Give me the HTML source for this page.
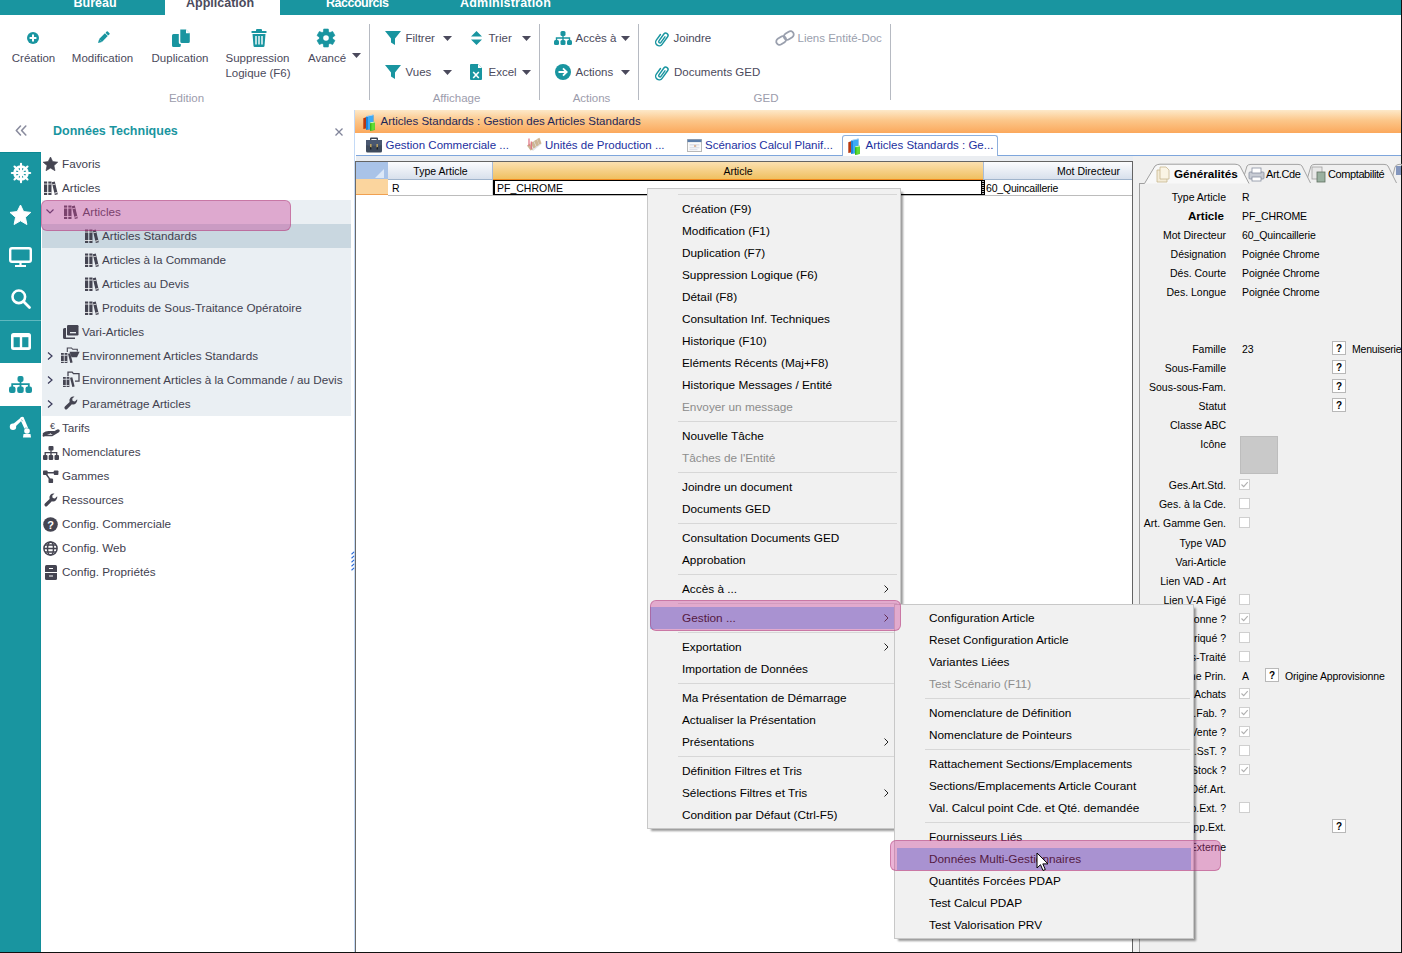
<!DOCTYPE html>
<html><head><meta charset="utf-8">
<style>
*{box-sizing:border-box;margin:0;padding:0}
html,body{width:1402px;height:953px;overflow:hidden;background:#fff;font-family:"Liberation Sans",sans-serif;position:relative}
.a{position:absolute;white-space:nowrap}
svg.a{overflow:visible}
</style></head><body>
<div class="a" style="left:0px;top:0px;width:1402px;height:15px;background:#1995a0"></div>
<div class="a" style="left:165px;top:0px;width:115px;height:15px;background:#fff"></div>
<div class="a" style="left:73.5px;top:-5.33px;font-size:12.5px;line-height:16px;color:#fff;font-weight:bold;">Bureau</div>
<div class="a" style="left:186px;top:-5.33px;font-size:12.5px;line-height:16px;color:#4b4a5c;font-weight:bold;">Application</div>
<div class="a" style="left:326px;top:-5.33px;font-size:12.5px;line-height:16px;color:#fff;font-weight:bold;letter-spacing:-0.5px;">Raccourcis</div>
<div class="a" style="left:460px;top:-5.33px;font-size:12.5px;line-height:16px;color:#fff;font-weight:bold;letter-spacing:0.2px;">Administration</div>
<svg class="a" style="left:27px;top:32px" width="12" height="12" viewBox="0 0 12 12"><circle cx="6" cy="6" r="6" fill="#1995a0"/><path d="M6 2.6v6.8M2.6 6h6.8" stroke="#fff" stroke-width="2"/></svg>
<div class="a" style="left:-26.5px;width:120px;text-align:center;top:51.02px;font-size:11.5px;line-height:14px;color:#4b4a5c;">Création</div>
<svg class="a" style="left:96px;top:31px" width="14" height="14" viewBox="0 0 14 14"><g transform="rotate(45 7 7)"><rect x="5" y="-1" width="4" height="2.6" rx="0.8" fill="#1995a0"/><rect x="5" y="2.3" width="4" height="8.2" fill="#1995a0"/><path d="M5 10.5h4L7 14z" fill="#1995a0"/></g></svg>
<div class="a" style="left:42.5px;width:120px;text-align:center;top:51.02px;font-size:11.5px;line-height:14px;color:#4b4a5c;">Modification</div>
<svg class="a" style="left:172px;top:29px" width="18" height="18" viewBox="0 0 18 18"><path d="M8.3 0.5H14l3.8 3.8v8.2a1.5 1.5 0 0 1-1.5 1.5H9.8a1.5 1.5 0 0 1-1.5-1.5z" fill="#1995a0"/><path d="M14 0.5v3.8h3.8z" fill="#fff"/><path d="M6.8 5H1.5A1.5 1.5 0 0 0 0 6.5v10A1.5 1.5 0 0 0 1.5 18h5.8a1.5 1.5 0 0 0 1.5-1.5V15H8.3A1.5 1.5 0 0 1 6.8 13.5z" fill="#1995a0"/></svg>
<div class="a" style="left:120.0px;width:120px;text-align:center;top:51.02px;font-size:11.5px;line-height:14px;color:#4b4a5c;">Duplication</div>
<svg class="a" style="left:251px;top:29px" width="16" height="18" viewBox="0 0 16 18"><rect x="0.5" y="2" width="15" height="2" rx="0.5" fill="#1995a0"/><rect x="5" y="0" width="6" height="3" rx="1" fill="#1995a0"/><path d="M1.5 5h13l-1 12a1.2 1.2 0 0 1-1.2 1H3.7a1.2 1.2 0 0 1-1.2-1z" fill="#1995a0"/><path d="M5 7v8.5M8 7v8.5M11 7v8.5" stroke="#fff" stroke-width="1.4"/></svg>
<div class="a" style="left:197.5px;width:120px;text-align:center;top:51.02px;font-size:11.5px;line-height:14px;color:#4b4a5c;">Suppression</div>
<div class="a" style="left:198.0px;width:120px;text-align:center;top:66.02px;font-size:11.5px;line-height:14px;color:#4b4a5c;">Logique (F6)</div>
<svg class="a" style="left:317px;top:29px" width="18" height="18" viewBox="0 0 18 18"><g fill="#1995a0" transform="translate(9 9)"><path d="M-2.3 -9H2.3L2.9 -5H-2.9z" transform="rotate(0)" stroke="#1995a0" stroke-width="0.6" stroke-linejoin="round"/><path d="M-2.3 -9H2.3L2.9 -5H-2.9z" transform="rotate(60)" stroke="#1995a0" stroke-width="0.6" stroke-linejoin="round"/><path d="M-2.3 -9H2.3L2.9 -5H-2.9z" transform="rotate(120)" stroke="#1995a0" stroke-width="0.6" stroke-linejoin="round"/><path d="M-2.3 -9H2.3L2.9 -5H-2.9z" transform="rotate(180)" stroke="#1995a0" stroke-width="0.6" stroke-linejoin="round"/><path d="M-2.3 -9H2.3L2.9 -5H-2.9z" transform="rotate(240)" stroke="#1995a0" stroke-width="0.6" stroke-linejoin="round"/><path d="M-2.3 -9H2.3L2.9 -5H-2.9z" transform="rotate(300)" stroke="#1995a0" stroke-width="0.6" stroke-linejoin="round"/><circle r="6.6"/><circle r="2.8" fill="#fff"/></g></svg>
<div class="a" style="left:308px;top:51.02px;font-size:11.5px;line-height:14px;color:#4b4a5c;">Avancé</div>
<svg class="a" style="left:352px;top:53px" width="9" height="5" viewBox="0 0 9 5"><path d="M0 0h9L4.5 5z" fill="#4b4a5c"/></svg>
<div class="a" style="left:369px;top:24px;width:1px;height:76px;background:#b6bac2"></div>
<div class="a" style="left:146.5px;width:80px;text-align:center;top:91.02px;font-size:11.5px;line-height:14px;color:#9c9cac;">Edition</div>
<svg class="a" style="left:385px;top:31px" width="16" height="14" viewBox="0 0 16 14"><path d="M0 0h16L10 7.5V14L6 11.5V7.5z" fill="#1995a0"/></svg>
<div class="a" style="left:405.5px;top:31.02px;font-size:11.5px;line-height:14px;color:#4b4a5c;">Filtrer</div>
<svg class="a" style="left:443px;top:36px" width="9" height="5" viewBox="0 0 9 5"><path d="M0 0h9L4.5 5z" fill="#4b4a5c"/></svg>
<svg class="a" style="left:471px;top:31px" width="11" height="14" viewBox="0 0 11 14"><path d="M5.5 0L11 5.5H0z M0 8.5h11L5.5 14z" fill="#1995a0"/></svg>
<div class="a" style="left:488.5px;top:31.02px;font-size:11.5px;line-height:14px;color:#4b4a5c;">Trier</div>
<svg class="a" style="left:522px;top:36px" width="9" height="5" viewBox="0 0 9 5"><path d="M0 0h9L4.5 5z" fill="#4b4a5c"/></svg>
<svg class="a" style="left:385px;top:65px" width="16" height="14" viewBox="0 0 16 14"><path d="M0 0h16L10 7.5V14L6 11.5V7.5z" fill="#1995a0"/></svg>
<div class="a" style="left:405.5px;top:65.02px;font-size:11.5px;line-height:14px;color:#4b4a5c;">Vues</div>
<svg class="a" style="left:443px;top:70px" width="9" height="5" viewBox="0 0 9 5"><path d="M0 0h9L4.5 5z" fill="#4b4a5c"/></svg>
<svg class="a" style="left:470px;top:64px" width="12" height="16" viewBox="0 0 12 16"><path d="M0 1a1 1 0 0 1 1-1h7l4 4v11a1 1 0 0 1-1 1H1a1 1 0 0 1-1-1z" fill="#1995a0"/><path d="M8 0v4h4z" fill="#fff"/><path d="M3.2 8l5.6 6M8.8 8l-5.6 6" stroke="#fff" stroke-width="1.6"/></svg>
<div class="a" style="left:488.5px;top:65.02px;font-size:11.5px;line-height:14px;color:#4b4a5c;">Excel</div>
<svg class="a" style="left:522px;top:70px" width="9" height="5" viewBox="0 0 9 5"><path d="M0 0h9L4.5 5z" fill="#4b4a5c"/></svg>
<div class="a" style="left:416.5px;width:80px;text-align:center;top:91.02px;font-size:11.5px;line-height:14px;color:#9c9cac;">Affichage</div>
<div class="a" style="left:539px;top:24px;width:1px;height:76px;background:#b6bac2"></div>
<svg class="a" style="left:554px;top:31px" width="18" height="14" viewBox="0 0 18 14"><g fill="#1995a0"><rect x="6.5" y="0" width="5" height="5" rx="1.5"/><rect x="0" y="9" width="5" height="5" rx="1.5"/><rect x="6.5" y="9" width="5" height="5" rx="1.5"/><rect x="13" y="9" width="5" height="5" rx="1.5"/></g><path d="M9 4v5M2.5 10V7h13v3" stroke="#1995a0" stroke-width="1.4" fill="none"/></svg>
<div class="a" style="left:575.5px;top:31.02px;font-size:11.5px;line-height:14px;color:#4b4a5c;">Accès à</div>
<svg class="a" style="left:621px;top:36px" width="9" height="5" viewBox="0 0 9 5"><path d="M0 0h9L4.5 5z" fill="#4b4a5c"/></svg>
<svg class="a" style="left:555px;top:64px" width="16" height="16" viewBox="0 0 16 16"><circle cx="8" cy="8" r="8" fill="#1995a0"/><path d="M3.5 8h8M8 4.3L11.7 8 8 11.7" stroke="#fff" stroke-width="1.8" fill="none"/></svg>
<div class="a" style="left:575.5px;top:65.02px;font-size:11.5px;line-height:14px;color:#4b4a5c;">Actions</div>
<svg class="a" style="left:621px;top:70px" width="9" height="5" viewBox="0 0 9 5"><path d="M0 0h9L4.5 5z" fill="#4b4a5c"/></svg>
<div class="a" style="left:551.5px;width:80px;text-align:center;top:91.02px;font-size:11.5px;line-height:14px;color:#9c9cac;">Actions</div>
<div class="a" style="left:638px;top:24px;width:1px;height:76px;background:#b6bac2"></div>
<svg class="a" style="left:654px;top:30px" width="16" height="17" viewBox="0 0 16 17"><g transform="translate(8 8.5) rotate(36) translate(-3.6 -8.3)"><path d="M5 5.2V12A1.25 1.25 0 0 1 2.5 12V3.6A2.3 2.3 0 0 1 7.1 3.6V13A3.55 3.55 0 0 1 0 13V6" stroke="#1995a0" stroke-width="1.45" fill="none" stroke-linecap="round"/></g></svg>
<div class="a" style="left:673.5px;top:31.02px;font-size:11.5px;line-height:14px;color:#4b4a5c;">Joindre</div>
<svg class="a" style="left:654px;top:64px" width="16" height="17" viewBox="0 0 16 17"><g transform="translate(8 8.5) rotate(36) translate(-3.6 -8.3)"><path d="M5 5.2V12A1.25 1.25 0 0 1 2.5 12V3.6A2.3 2.3 0 0 1 7.1 3.6V13A3.55 3.55 0 0 1 0 13V6" stroke="#1995a0" stroke-width="1.45" fill="none" stroke-linecap="round"/></g></svg>
<div class="a" style="left:674px;top:65.02px;font-size:11.5px;line-height:14px;color:#4b4a5c;">Documents GED</div>
<svg class="a" style="left:775px;top:30px" width="20" height="16" viewBox="0 0 20 16"><g stroke="#9aa0ae" stroke-width="1.8" fill="none" transform="translate(10 8) rotate(-33)"><rect x="-9.8" y="-3.3" width="10.5" height="6.6" rx="3.3"/><rect x="-0.7" y="-3.3" width="10.5" height="6.6" rx="3.3"/></g></svg>
<div class="a" style="left:797.5px;top:31.02px;font-size:11.5px;line-height:14px;color:#9aa0ae;">Liens Entité-Doc</div>
<div class="a" style="left:726.0px;width:80px;text-align:center;top:91.02px;font-size:11.5px;line-height:14px;color:#9c9cac;">GED</div>
<div class="a" style="left:890px;top:24px;width:1px;height:76px;background:#b6bac2"></div>
<svg class="a" style="left:15px;top:125px" width="12" height="11" viewBox="0 0 12 11"><path d="M5.5 1L1.3 5.5 5.5 10M10.8 1L6.6 5.5 10.8 10" stroke="#8a8c9e" stroke-width="1.6" fill="none" stroke-linecap="round" stroke-linejoin="round"/></svg>
<div class="a" style="left:53px;top:122.67px;font-size:12.5px;line-height:16px;color:#1995a0;font-weight:bold;">Données Techniques</div>
<svg class="a" style="left:335px;top:128px" width="8" height="8" viewBox="0 0 8 8"><path d="M0.5 0.5l7 7M7.5 0.5l-7 7" stroke="#80849a" stroke-width="1.3"/></svg>
<div class="a" style="left:0px;top:152px;width:41px;height:801px;background:#1995a0;border-top:1px solid #0b8893;border-right:1px solid #138e99"></div>
<div class="a" style="left:0px;top:320px;width:41px;height:1px;background:#5fb8bf"></div>
<div class="a" style="left:0px;top:363px;width:41px;height:43px;background:#fff"></div>
<svg class="a" style="left:11px;top:163px" width="20" height="20" viewBox="0 0 20 20"><g transform="translate(10 10)" fill="none" stroke="#fff"><circle r="6.4" stroke-width="2.8"/><circle r="2.2" fill="#fff" stroke="none"/><path d="M0 -2V-9.2" stroke-width="2.1" stroke-linecap="round" transform="rotate(0)"/><path d="M0 -2V-9.2" stroke-width="2.1" stroke-linecap="round" transform="rotate(45)"/><path d="M0 -2V-9.2" stroke-width="2.1" stroke-linecap="round" transform="rotate(90)"/><path d="M0 -2V-9.2" stroke-width="2.1" stroke-linecap="round" transform="rotate(135)"/><path d="M0 -2V-9.2" stroke-width="2.1" stroke-linecap="round" transform="rotate(180)"/><path d="M0 -2V-9.2" stroke-width="2.1" stroke-linecap="round" transform="rotate(225)"/><path d="M0 -2V-9.2" stroke-width="2.1" stroke-linecap="round" transform="rotate(270)"/><path d="M0 -2V-9.2" stroke-width="2.1" stroke-linecap="round" transform="rotate(315)"/></g></svg>
<svg class="a" style="left:10px;top:205px" width="21" height="20" viewBox="0 0 21 20"><path d="M10.5 0l3.1 6.6 7.2.8-5.4 4.9 1.5 7.2-6.4-3.7-6.4 3.7 1.5-7.2L0 7.4l7.2-.8z" fill="#fff" stroke="#fff" stroke-width="1" stroke-linejoin="round"/></svg>
<svg class="a" style="left:9px;top:247px" width="23" height="20" viewBox="0 0 23 20"><rect x="1.2" y="1.2" width="20.6" height="13.6" rx="1.8" fill="none" stroke="#fff" stroke-width="2.4"/><path d="M11.5 15v3.5M6 19h11" stroke="#fff" stroke-width="2.2"/></svg>
<svg class="a" style="left:11px;top:289px" width="20" height="20" viewBox="0 0 20 20"><circle cx="7.8" cy="7.8" r="6.3" fill="none" stroke="#fff" stroke-width="2.6"/><path d="M12.5 12.5l6 6" stroke="#fff" stroke-width="2.8" stroke-linecap="round"/></svg>
<svg class="a" style="left:11px;top:333px" width="20" height="17" viewBox="0 0 20 17"><rect x="0" y="0" width="20" height="17" rx="2.5" fill="#fff"/><rect x="2.6" y="4.2" width="6.2" height="10" fill="#1995a0"/><rect x="11.2" y="4.2" width="6.2" height="10" fill="#1995a0"/></svg>
<svg class="a" style="left:9px;top:376px" width="23" height="17" viewBox="0 0 23 17"><g fill="#1995a0"><rect x="8.5" y="0" width="6" height="6" rx="2"/><rect x="0" y="10.5" width="6.5" height="6.5" rx="2"/><rect x="8.2" y="10.5" width="6.5" height="6.5" rx="2"/><rect x="16.5" y="10.5" width="6.5" height="6.5" rx="2"/></g><path d="M11.5 5v6M3.2 11V8.2h16.6V11" stroke="#1995a0" stroke-width="1.8" fill="none"/></svg>
<svg class="a" style="left:9px;top:416px" width="22" height="22" viewBox="0 0 22 22"><g fill="#fff"><circle cx="4" cy="10.8" r="3.2"/><path d="M3.5 8.5L12 1.5a2 2 0 0 1 2.8.4l-1.5 2.2L6 11z"/><path d="M11.2 3.2a2 2 0 0 1 3.5-1.6l4.3 10.2-3.3 1.4z"/><circle cx="18" cy="15" r="2.8"/><path d="M14.5 18h7l.5 3.5h-8z"/></g><path d="M12.5 3.5l1.2 1.8M15.5 12.5l2 -.8" stroke="#1995a0" stroke-width="0.6"/></svg>
<div class="a" style="left:42px;top:200px;width:309px;height:216px;background:#eaeff3"></div>
<div class="a" style="left:42px;top:224px;width:309px;height:24px;background:#c9d7e0"></div>
<svg class="a" style="left:43px;top:157px" width="15" height="14" viewBox="0 0 21 20"><path d="M10.5 0l3.1 6.6 7.2.8-5.4 4.9 1.5 7.2-6.4-3.7-6.4 3.7 1.5-7.2L0 7.4l7.2-.8z" fill="#454552" stroke="#454552" stroke-width="1" stroke-linejoin="round"/></svg>
<div class="a" style="left:62px;top:156.45px;font-size:11.7px;line-height:15px;color:#41414f;">Favoris</div>
<svg class="a" style="left:43.5px;top:181px" width="14" height="14" viewBox="0 0 14 14"><g fill="#454552"><rect x="0" y="0.5" width="3.2" height="13.5"/><rect x="4.3" y="0.5" width="3.2" height="13.5"/><path d="M7.8 1.3L10.8 0.5 13.8 13.2 10.8 14z"/></g><g fill="#fff" opacity="0.85"><rect x="0" y="2.6" width="7.5" height="0.9"/><rect x="0" y="11" width="7.5" height="0.9"/><path d="M8.2 3.4l2.9-.75.2.9-2.9.75z"/><path d="M10.2 11.8l2.9-.75.2.9-2.9.75z"/></g></svg>
<div class="a" style="left:62px;top:180.45px;font-size:11.7px;line-height:15px;color:#41414f;">Articles</div>
<svg class="a" style="left:46px;top:209px" width="8" height="5" viewBox="0 0 8 5"><path d="M0.5 0.5L4 4 7.5 0.5" stroke="#3a3a5a" stroke-width="1.2" fill="none"/></svg>
<svg class="a" style="left:63.5px;top:205px" width="14" height="14" viewBox="0 0 14 14"><g fill="#454552"><rect x="0" y="0.5" width="3.2" height="13.5"/><rect x="4.3" y="0.5" width="3.2" height="13.5"/><path d="M7.8 1.3L10.8 0.5 13.8 13.2 10.8 14z"/></g><g fill="#fff" opacity="0.85"><rect x="0" y="2.6" width="7.5" height="0.9"/><rect x="0" y="11" width="7.5" height="0.9"/><path d="M8.2 3.4l2.9-.75.2.9-2.9.75z"/><path d="M10.2 11.8l2.9-.75.2.9-2.9.75z"/></g></svg>
<div class="a" style="left:82.5px;top:204.45px;font-size:11.7px;line-height:15px;color:#41414f;">Articles</div>
<svg class="a" style="left:84.5px;top:229px" width="14" height="14" viewBox="0 0 14 14"><g fill="#454552"><rect x="0" y="0.5" width="3.2" height="13.5"/><rect x="4.3" y="0.5" width="3.2" height="13.5"/><path d="M7.8 1.3L10.8 0.5 13.8 13.2 10.8 14z"/></g><g fill="#fff" opacity="0.85"><rect x="0" y="2.6" width="7.5" height="0.9"/><rect x="0" y="11" width="7.5" height="0.9"/><path d="M8.2 3.4l2.9-.75.2.9-2.9.75z"/><path d="M10.2 11.8l2.9-.75.2.9-2.9.75z"/></g></svg>
<div class="a" style="left:102px;top:228.45px;font-size:11.7px;line-height:15px;color:#41414f;">Articles Standards</div>
<svg class="a" style="left:84.5px;top:253px" width="14" height="14" viewBox="0 0 14 14"><g fill="#454552"><rect x="0" y="0.5" width="3.2" height="13.5"/><rect x="4.3" y="0.5" width="3.2" height="13.5"/><path d="M7.8 1.3L10.8 0.5 13.8 13.2 10.8 14z"/></g><g fill="#fff" opacity="0.85"><rect x="0" y="2.6" width="7.5" height="0.9"/><rect x="0" y="11" width="7.5" height="0.9"/><path d="M8.2 3.4l2.9-.75.2.9-2.9.75z"/><path d="M10.2 11.8l2.9-.75.2.9-2.9.75z"/></g></svg>
<div class="a" style="left:102px;top:252.45px;font-size:11.7px;line-height:15px;color:#41414f;">Articles à la Commande</div>
<svg class="a" style="left:84.5px;top:277px" width="14" height="14" viewBox="0 0 14 14"><g fill="#454552"><rect x="0" y="0.5" width="3.2" height="13.5"/><rect x="4.3" y="0.5" width="3.2" height="13.5"/><path d="M7.8 1.3L10.8 0.5 13.8 13.2 10.8 14z"/></g><g fill="#fff" opacity="0.85"><rect x="0" y="2.6" width="7.5" height="0.9"/><rect x="0" y="11" width="7.5" height="0.9"/><path d="M8.2 3.4l2.9-.75.2.9-2.9.75z"/><path d="M10.2 11.8l2.9-.75.2.9-2.9.75z"/></g></svg>
<div class="a" style="left:102px;top:276.45px;font-size:11.7px;line-height:15px;color:#41414f;">Articles au Devis</div>
<svg class="a" style="left:84.5px;top:301px" width="14" height="14" viewBox="0 0 14 14"><g fill="#454552"><rect x="0" y="0.5" width="3.2" height="13.5"/><rect x="4.3" y="0.5" width="3.2" height="13.5"/><path d="M7.8 1.3L10.8 0.5 13.8 13.2 10.8 14z"/></g><g fill="#fff" opacity="0.85"><rect x="0" y="2.6" width="7.5" height="0.9"/><rect x="0" y="11" width="7.5" height="0.9"/><path d="M8.2 3.4l2.9-.75.2.9-2.9.75z"/><path d="M10.2 11.8l2.9-.75.2.9-2.9.75z"/></g></svg>
<div class="a" style="left:102px;top:300.45px;font-size:11.7px;line-height:15px;color:#41414f;">Produits de Sous-Traitance Opératoire</div>
<svg class="a" style="left:63px;top:325px" width="16" height="14" viewBox="0 0 16 14"><g fill="#454552"><rect x="4" y="0" width="11.5" height="10.5" rx="1.2"/><path d="M0 4.5a1.5 1.5 0 0 1 1.5-1.5H3v9.5h9V14H1.5A1.5 1.5 0 0 1 0 12.5z"/></g><rect x="7" y="7" width="6" height="1.3" fill="#eaeff3"/></svg>
<div class="a" style="left:82px;top:324.45px;font-size:11.7px;line-height:15px;color:#41414f;">Vari-Articles</div>
<svg class="a" style="left:47px;top:352px" width="6" height="8" viewBox="0 0 6 8"><path d="M1 0.5L5 4 1 7.5" stroke="#3a3a5a" stroke-width="1.2" fill="none"/></svg>
<svg class="a" style="left:61px;top:347px" width="19" height="16" viewBox="0 0 19 16"><g fill="#454552"><rect x="0" y="6" width="2.8" height="10"/><rect x="3.6" y="6" width="2.8" height="10"/><path d="M7 6.8L9.3 6.2 11.6 15.4 9.3 16z"/></g><g fill="#eaeff3"><rect x="0" y="7.8" width="6.4" height="0.8"/><rect x="0" y="14" width="6.4" height="0.8"/></g><path d="M6.3 5V1h4.2l1.2 1.3h4.6V4.5" fill="none" stroke="#454552" stroke-width="1.1"/><path d="M8.5 4.8H18.6L16 10.2H10.5z" fill="#454552"/></svg>
<div class="a" style="left:82px;top:348.45px;font-size:11.7px;line-height:15px;color:#41414f;">Environnement Articles Standards</div>
<svg class="a" style="left:47px;top:376px" width="6" height="8" viewBox="0 0 6 8"><path d="M1 0.5L5 4 1 7.5" stroke="#3a3a5a" stroke-width="1.2" fill="none"/></svg>
<svg class="a" style="left:63px;top:371px" width="17" height="17" viewBox="0 0 17 17"><g fill="#454552"><rect x="0" y="6" width="2.8" height="10"/><rect x="3.6" y="6" width="2.8" height="10"/><path d="M7 6.8L9.3 6.2 11.6 15.4 9.3 16z"/></g><g fill="#eaeff3"><rect x="0" y="7.8" width="6.4" height="0.8"/><rect x="0" y="14" width="6.4" height="0.8"/></g><path d="M5 5.2V1.2h4.2l1.2 1.4h5.6V10.2H12" fill="none" stroke="#454552" stroke-width="1.3"/></svg>
<div class="a" style="left:82px;top:372.45px;font-size:11.7px;line-height:15px;color:#41414f;">Environnement Articles à la Commande / au Devis</div>
<svg class="a" style="left:47px;top:400px" width="6" height="8" viewBox="0 0 6 8"><path d="M1 0.5L5 4 1 7.5" stroke="#3a3a5a" stroke-width="1.2" fill="none"/></svg>
<svg class="a" style="left:64px;top:396px" width="14" height="14" viewBox="0 0 14 14"><path d="M13.2 3.2l-2.3 2.3-2.2-.5-.5-2.2L10.5.5A4.2 4.2 0 0 0 5.6 5.9L.9 10.6a1.6 1.6 0 0 0 2.3 2.3l4.7-4.7a4.2 4.2 0 0 0 5.3-5z" fill="#454552"/></svg>
<div class="a" style="left:82px;top:396.45px;font-size:11.7px;line-height:15px;color:#41414f;">Paramétrage Articles</div>
<svg class="a" style="left:43px;top:421px" width="17" height="16" viewBox="0 0 17 16"><text x="9.5" y="7.5" text-anchor="middle" font-size="9" font-family="Liberation Sans" fill="#454552">€</text><path d="M0.5 15.5V12.5Q3 10.5 6.5 10.8H11Q12.3 11 11.8 12.3H8" fill="#454552" stroke="#454552" stroke-width="1.4" stroke-linejoin="round"/><path d="M0.5 14.5H9L15.5 10.5Q16.3 10 15.7 9.3Q15 8.8 14 9.5L11 11.5" fill="none" stroke="#454552" stroke-width="1.6" stroke-linecap="round"/></svg>
<div class="a" style="left:62px;top:420.45px;font-size:11.7px;line-height:15px;color:#41414f;">Tarifs</div>
<svg class="a" style="left:43px;top:446px" width="16" height="14" viewBox="0 0 16 14"><g fill="#454552"><rect x="5.5" y="0" width="5" height="4.5" rx="1"/><rect x="0" y="9" width="4.5" height="5" rx="1"/><rect x="5.7" y="9" width="4.5" height="5" rx="1"/><rect x="11.5" y="9" width="4.5" height="5" rx="1"/></g><path d="M8 4v5M2.2 9V6.7h11.5V9" stroke="#454552" stroke-width="1.3" fill="none"/></svg>
<div class="a" style="left:62px;top:444.45px;font-size:11.7px;line-height:15px;color:#41414f;">Nomenclatures</div>
<svg class="a" style="left:43px;top:470px" width="16" height="14" viewBox="0 0 16 14"><g fill="#454552"><rect x="0" y="0.5" width="4.6" height="4.6" rx="0.8"/><rect x="10.8" y="0.5" width="4.6" height="4.6" rx="0.8"/><rect x="5.5" y="8.5" width="4.6" height="4.6" rx="1.2"/></g><path d="M3 2.8h9M2.4 3l5 7" stroke="#454552" stroke-width="1.4"/></svg>
<div class="a" style="left:62px;top:468.45px;font-size:11.7px;line-height:15px;color:#41414f;">Gammes</div>
<svg class="a" style="left:44px;top:493px" width="14" height="14" viewBox="0 0 14 14"><path d="M13.2 3.2l-2.3 2.3-2.2-.5-.5-2.2L10.5.5A4.2 4.2 0 0 0 5.6 5.9L.9 10.6a1.6 1.6 0 0 0 2.3 2.3l4.7-4.7a4.2 4.2 0 0 0 5.3-5z" fill="#454552"/></svg>
<div class="a" style="left:62px;top:492.45px;font-size:11.7px;line-height:15px;color:#41414f;">Ressources</div>
<svg class="a" style="left:43px;top:517px" width="15" height="15" viewBox="0 0 15 15"><circle cx="7.5" cy="7.5" r="7.3" fill="#454552"/><text x="7.5" y="11.5" text-anchor="middle" font-size="11" font-weight="bold" font-family="Liberation Sans" fill="#fff">?</text></svg>
<div class="a" style="left:62px;top:516.45px;font-size:11.7px;line-height:15px;color:#41414f;">Config. Commerciale</div>
<svg class="a" style="left:43px;top:541px" width="15" height="15" viewBox="0 0 15 15"><g fill="none" stroke="#454552" stroke-width="1.5"><circle cx="7.5" cy="7.5" r="6.6"/><ellipse cx="7.5" cy="7.5" rx="3" ry="6.6"/><path d="M1 7.5h13M2 4h11M2 11h11"/></g></svg>
<div class="a" style="left:62px;top:540.45px;font-size:11.7px;line-height:15px;color:#41414f;">Config. Web</div>
<svg class="a" style="left:45px;top:565px" width="12" height="15" viewBox="0 0 12 15"><rect x="0" y="0" width="12" height="15" rx="1.5" fill="#454552"/><path d="M0 7.5h12M4 3.5h4M4 11h4" stroke="#fff" stroke-width="1.2"/></svg>
<div class="a" style="left:62px;top:564.45px;font-size:11.7px;line-height:15px;color:#41414f;">Config. Propriétés</div>
<div class="a" style="left:354px;top:110px;width:1px;height:843px;background:#c4daf6"></div>
<div class="a" style="left:355px;top:161px;width:1px;height:792px;background:#6a6a6a"></div>
<svg class="a" style="left:351px;top:551px" width="4" height="20" viewBox="0 0 4 20"><g stroke="#2a6ad8" stroke-width="1.1" stroke-linecap="round"><path d="M0.8 3L2.8 1.2M0.8 7L2.8 5.2M0.8 11L2.8 9.2M0.8 15L2.8 13.2M0.8 19L2.8 17.2"/></g></svg>
<div class="a" style="left:355px;top:110px;width:1046px;height:23px;background:linear-gradient(#fde9c9,#fcc78a 45%,#fba85c)"></div>
<svg class="a" style="left:363px;top:114px" width="13" height="17" viewBox="0 0 13 17"><path d="M0.3 4.2L3 3.3V14.5L0.3 15z" fill="#b8380f"/><path d="M3 2.2L10.5 0.5V14.8L3 16z" fill="#1e86dc"/><path d="M5 2.2L10 1.1V14.4L5 15.3z" fill="#3eaaf4"/><path d="M3 2.2L10.5 0.5 11 1 3.5 2.8z" fill="#e8f4ff"/><path d="M7 8.6L11.8 7.6V16L7 17z" fill="#36b81c"/><path d="M8.4 8.8L11.8 8.1V15.6L8.4 16.4z" fill="#62dc34"/><path d="M7 8.6L11.8 7.6 12.2 8.2 7.4 9.2z" fill="#e8ffe0"/></svg>
<div class="a" style="left:380.5px;top:114.02px;font-size:11.5px;line-height:14px;color:#1e2758;">Articles Standards : Gestion des Articles Standards</div>
<div class="a" style="left:356px;top:133px;width:1046px;height:22px;background:#fff"></div>
<div class="a" style="left:356px;top:155px;width:1046px;height:1px;background:#7ea6dc"></div>
<div class="a" style="left:356px;top:156px;width:777px;height:6px;background:#eaedf1"></div>
<svg class="a" style="left:366px;top:137px" width="16" height="16" viewBox="0 0 16 16"><path d="M4 1.5Q4 0.5 5 0.5H11Q12 0.5 12 1.5V3H10.6V2H5.4V3H4z" fill="#3a4454"/><rect x="0" y="3" width="16" height="12.5" rx="1.5" fill="#3e4a5c"/><path d="M0 3h16v5.2Q8 9.5 0 8.2z" fill="#4a5870"/><rect x="4" y="7" width="1.6" height="3.6" fill="#b8a060"/><rect x="10.4" y="7" width="1.6" height="3.6" fill="#b8a060"/><rect x="4.3" y="10" width="1" height="2.5" fill="#111"/><rect x="10.7" y="10" width="1" height="2.5" fill="#111"/></svg>
<div class="a" style="left:385.5px;top:137.52px;font-size:11.5px;line-height:14px;color:#1c30a0;">Gestion Commerciale ...</div>
<svg class="a" style="left:526px;top:137px" width="16" height="16" viewBox="0 0 16 16"><path d="M1 9L10 3 15.5 7 7 14z" fill="#e4e4e8"/><g fill="#cdb594"><path d="M1 8.5L4 6.5 7 12.5 4.5 13.5z"/><path d="M4.5 6L7.5 4.2 10 10 7.5 11.5z"/><path d="M8 4L11 2.2 13 8 10.5 9.5z"/><path d="M11 2L13.5 0.8 15.5 6.5 13.2 7.6z"/></g><path d="M3 1.5V9M5.3 4.5V12" stroke="#e07080" stroke-width="1.2"/></svg>
<div class="a" style="left:545px;top:137.52px;font-size:11.5px;line-height:14px;color:#1c30a0;">Unités de Production ...</div>
<svg class="a" style="left:687px;top:139px" width="15" height="13" viewBox="0 0 15 13"><rect x="0.5" y="0.5" width="14" height="12" fill="#fafafa" stroke="#b8b8b8"/><rect x="0.5" y="0.5" width="14" height="2.6" fill="#5a7ca8"/><g fill="#dde0ea"><rect x="2.5" y="5" width="10" height="1.6"/><rect x="2.5" y="7.8" width="10" height="1.6"/><rect x="2.5" y="10" width="8" height="1.2"/></g><rect x="7" y="6" width="2.2" height="2" fill="#d8b8a0"/></svg>
<div class="a" style="left:705px;top:137.52px;font-size:11.5px;line-height:14px;color:#1c30a0;">Scénarios Calcul Planif...</div>
<div class="a" style="left:842px;top:135px;width:156px;height:21px;background:#fff;border:1px solid #8fb0dc;border-bottom:none;border-radius:3px 3px 0 0"></div>
<svg class="a" style="left:848px;top:138px" width="13" height="17" viewBox="0 0 13 17"><path d="M0.3 4.2L3 3.3V14.5L0.3 15z" fill="#b8380f"/><path d="M3 2.2L10.5 0.5V14.8L3 16z" fill="#1e86dc"/><path d="M5 2.2L10 1.1V14.4L5 15.3z" fill="#3eaaf4"/><path d="M3 2.2L10.5 0.5 11 1 3.5 2.8z" fill="#e8f4ff"/><path d="M7 8.6L11.8 7.6V16L7 17z" fill="#36b81c"/><path d="M8.4 8.8L11.8 8.1V15.6L8.4 16.4z" fill="#62dc34"/><path d="M7 8.6L11.8 7.6 12.2 8.2 7.4 9.2z" fill="#e8ffe0"/></svg>
<div class="a" style="left:865.5px;top:138.02px;font-size:11.5px;line-height:14px;color:#1c30a0;">Articles Standards : Ge...</div>
<div class="a" style="left:355px;top:161px;width:778px;height:1px;background:#646464"></div>
<div class="a" style="left:1132px;top:161px;width:1px;height:792px;background:#646464"></div>
<div class="a" style="left:356px;top:162px;width:32px;height:18px;background:#a9c3e8;border-bottom:1px solid #8aa8d0"></div>
<svg class="a" style="left:375px;top:169px" width="9" height="9" viewBox="0 0 9 9"><path d="M9 0v9H0z" fill="#dce8f8"/></svg>
<div class="a" style="left:388px;top:162px;width:105px;height:18px;background:linear-gradient(#fbfcfe,#d8e0ec);border-right:1px solid #a8bcd8;border-bottom:1px solid #a0b4cc"></div>
<div class="a" style="left:493px;top:162px;width:490px;height:18px;background:linear-gradient(#fbe0b0,#f0c060);border-bottom:1px solid #f08a20"></div>
<div class="a" style="left:983px;top:162px;width:149px;height:18px;background:linear-gradient(#fbfcfe,#d8e0ec);border-left:1px solid #a8bcd8;border-bottom:1px solid #a0b4cc"></div>
<div class="a" style="left:390.5px;width:100px;text-align:center;top:164.86px;font-size:10.5px;line-height:13px;color:#000;">Type Article</div>
<div class="a" style="left:688.0px;width:100px;text-align:center;top:164.86px;font-size:10.5px;line-height:13px;color:#000;">Article</div>
<div class="a" style="left:1000px;width:120px;text-align:right;top:164.86px;font-size:10.5px;line-height:13px;color:#000;">Mot Directeur</div>
<div class="a" style="left:356px;top:179px;width:32px;height:16px;background:#fbd59e;border-bottom:1px solid #f0a050"></div>
<div class="a" style="left:388px;top:180px;width:105px;height:16px;background:#fff;border-bottom:1px solid #bcbcbc;border-right:1px solid #d8d8d8"></div>
<div class="a" style="left:983px;top:180px;width:149px;height:16px;background:#fff;border-bottom:1px solid #bcbcbc"></div>
<div class="a" style="left:493px;top:180px;width:490px;height:16px;border-bottom:1px solid #bcbcbc"></div>
<div class="a" style="left:493px;top:180px;width:489px;height:15px;background:#fff;border:1px solid #000;border-left:2px solid #000"></div>
<div class="a" style="left:982px;top:180px;width:2px;height:15px;background:repeating-linear-gradient(#000 0 1px,#bbb 1px 2px)"></div>
<div class="a" style="left:984px;top:180px;width:1px;height:15px;background:#000"></div>
<div class="a" style="left:392px;top:181.86px;font-size:10.5px;line-height:13px;color:#000;">R</div>
<div class="a" style="left:497px;top:181.86px;font-size:10.5px;line-height:13px;color:#000;">PF_CHROME</div>
<div class="a" style="left:986px;top:181.86px;font-size:10.5px;line-height:13px;color:#000;letter-spacing:-0.2px;">60_Quincaillerie</div>
<div class="a" style="left:1133px;top:156px;width:269px;height:797px;background:#f0f0f0"></div>
<div class="a" style="left:1139px;top:183px;width:262px;height:770px;border-left:1px solid #a0a0a0"></div>
<div class="a" style="left:1401px;top:0px;width:1px;height:953px;background:#111"></div>
<svg class="a" style="left:1135px;top:160px" width="267" height="25" viewBox="0 0 267 25"><path d="M256 23L260 7Q261 4.4 264 4.4H267" fill="#f0f0f0" stroke="#a4a4a4"/><path d="M171 23L176 6Q177 4.4 180 4.4H249Q252 4.4 253 6L261.5 23" fill="#f0f0f0" stroke="#a4a4a4"/><path d="M107 23L112 6Q113 4.4 116 4.4H163Q166 4.4 167 6L175.5 23" fill="#f0f0f0" stroke="#a4a4a4"/><path d="M4.5 23.5H9.5L20 6Q22 4.2 25 4.2H100Q103 4.2 105 6L114 23.5" fill="#f8f8f8" stroke="#a0a0a0"/><path d="M4.5 23.5V25" stroke="#a0a0a0"/></svg>
<svg class="a" style="left:1156px;top:167px" width="14" height="15" viewBox="0 0 14 15"><path d="M1 3h7l3 3v9H1z" fill="#f4ecd8" stroke="#c8b890" stroke-width="0.8"/><path d="M4 0h6l3 3v9H4z" fill="#faf4e4" stroke="#c8b890" stroke-width="0.8"/></svg>
<div class="a" style="left:1174px;top:166.45px;font-size:11.7px;line-height:15px;color:#000;font-weight:bold;letter-spacing:0px;">Généralités</div>
<svg class="a" style="left:1249px;top:167px" width="15" height="14" viewBox="0 0 15 14"><rect x="0" y="5" width="15" height="7" rx="1" fill="#c8ccd4" stroke="#8890a0" stroke-width="0.8"/><rect x="3" y="1" width="9" height="5" fill="#fff" stroke="#8890a0" stroke-width="0.8"/><rect x="3" y="10" width="9" height="4" fill="#fff" stroke="#8890a0" stroke-width="0.8"/></svg>
<div class="a" style="left:1266px;top:167.19px;font-size:11px;line-height:14px;color:#000;letter-spacing:-0.4px;">Art.Cde</div>
<svg class="a" style="left:1312px;top:167px" width="14" height="15" viewBox="0 0 14 15"><rect x="0" y="0" width="10" height="12" fill="#e8e8e8" stroke="#a0a0a0" stroke-width="0.8"/><rect x="5" y="5" width="8" height="10" fill="#9ab0a0" stroke="#607060" stroke-width="0.8"/></svg>
<div class="a" style="left:1328px;top:167.19px;font-size:11px;line-height:14px;color:#000;letter-spacing:-0.4px;">Comptabilité</div>
<svg class="a" style="left:1396px;top:166px" width="5" height="15" viewBox="0 0 5 15"><rect x="0" y="0" width="5" height="9" fill="#6880b0" opacity="0.8"/></svg>
<div class="a" style="left:1096px;width:130px;text-align:right;top:190.86px;font-size:10.5px;line-height:13px;color:#000;">Type Article</div>
<div class="a" style="left:1242px;top:190.86px;font-size:10.5px;line-height:13px;color:#000;letter-spacing:-0.1px;">R</div>
<div class="a" style="left:1094px;width:130px;text-align:right;top:208.98px;font-size:11.6px;line-height:14px;color:#000;font-weight:bold;">Article</div>
<div class="a" style="left:1242px;top:209.86px;font-size:10.5px;line-height:13px;color:#000;letter-spacing:-0.1px;">PF_CHROME</div>
<div class="a" style="left:1096px;width:130px;text-align:right;top:228.86px;font-size:10.5px;line-height:13px;color:#000;">Mot Directeur</div>
<div class="a" style="left:1242px;top:228.86px;font-size:10.5px;line-height:13px;color:#000;letter-spacing:-0.1px;">60_Quincaillerie</div>
<div class="a" style="left:1096px;width:130px;text-align:right;top:247.86px;font-size:10.5px;line-height:13px;color:#000;">Désignation</div>
<div class="a" style="left:1242px;top:247.86px;font-size:10.5px;line-height:13px;color:#000;letter-spacing:-0.1px;">Poignée Chrome</div>
<div class="a" style="left:1096px;width:130px;text-align:right;top:266.86px;font-size:10.5px;line-height:13px;color:#000;">Dés. Courte</div>
<div class="a" style="left:1242px;top:266.86px;font-size:10.5px;line-height:13px;color:#000;letter-spacing:-0.1px;">Poignée Chrome</div>
<div class="a" style="left:1096px;width:130px;text-align:right;top:285.86px;font-size:10.5px;line-height:13px;color:#000;">Des. Longue</div>
<div class="a" style="left:1242px;top:285.86px;font-size:10.5px;line-height:13px;color:#000;letter-spacing:-0.1px;">Poignée Chrome</div>
<div class="a" style="left:1096px;width:130px;text-align:right;top:342.86px;font-size:10.5px;line-height:13px;color:#000;">Famille</div>
<div class="a" style="left:1242px;top:342.86px;font-size:10.5px;line-height:13px;color:#000;letter-spacing:-0.1px;">23</div>
<div class="a" style="left:1096px;width:130px;text-align:right;top:361.86px;font-size:10.5px;line-height:13px;color:#000;">Sous-Famille</div>
<div class="a" style="left:1096px;width:130px;text-align:right;top:380.86px;font-size:10.5px;line-height:13px;color:#000;">Sous-sous-Fam.</div>
<div class="a" style="left:1096px;width:130px;text-align:right;top:399.86px;font-size:10.5px;line-height:13px;color:#000;">Statut</div>
<div class="a" style="left:1096px;width:130px;text-align:right;top:418.86px;font-size:10.5px;line-height:13px;color:#000;">Classe ABC</div>
<div class="a" style="left:1096px;width:130px;text-align:right;top:437.86px;font-size:10.5px;line-height:13px;color:#000;">Icône</div>
<div class="a" style="left:1332px;top:341px;width:14px;height:14px;background:#fff;border:1px solid #b8b8b8"></div>
<div class="a" style="left:1332.0px;width:14px;text-align:center;top:343.04px;font-size:10px;line-height:12px;color:#000;font-weight:bold;">?</div>
<div class="a" style="left:1332px;top:360px;width:14px;height:14px;background:#fff;border:1px solid #b8b8b8"></div>
<div class="a" style="left:1332.0px;width:14px;text-align:center;top:362.04px;font-size:10px;line-height:12px;color:#000;font-weight:bold;">?</div>
<div class="a" style="left:1332px;top:379px;width:14px;height:14px;background:#fff;border:1px solid #b8b8b8"></div>
<div class="a" style="left:1332.0px;width:14px;text-align:center;top:381.04px;font-size:10px;line-height:12px;color:#000;font-weight:bold;">?</div>
<div class="a" style="left:1332px;top:398px;width:14px;height:14px;background:#fff;border:1px solid #b8b8b8"></div>
<div class="a" style="left:1332.0px;width:14px;text-align:center;top:400.04px;font-size:10px;line-height:12px;color:#000;font-weight:bold;">?</div>
<div class="a" style="left:1352px;top:342.86px;font-size:10.5px;line-height:13px;color:#000;letter-spacing:-0.2px;">Menuiserie</div>
<div class="a" style="left:1240px;top:436px;width:38px;height:38px;background:#c9c9c9;border:1px solid #bdbdbd"></div>
<div class="a" style="left:1096px;width:130px;text-align:right;top:478.86px;font-size:10.5px;line-height:13px;color:#000;">Ges.Art.Std.</div>
<div class="a" style="left:1239px;top:479px;width:11px;height:11px;background:#fff;border:1px solid #cfcfcf"></div>
<svg class="a" style="left:1240px;top:480px" width="9" height="9" viewBox="0 0 9 9"><path d="M1.5 4.5l2.2 2.2 4-4.5" stroke="#b0b0b0" stroke-width="1.1" fill="none"/></svg>
<div class="a" style="left:1096px;width:130px;text-align:right;top:497.86px;font-size:10.5px;line-height:13px;color:#000;">Ges. à la Cde.</div>
<div class="a" style="left:1239px;top:498px;width:11px;height:11px;background:#fff;border:1px solid #cfcfcf"></div>
<div class="a" style="left:1096px;width:130px;text-align:right;top:516.86px;font-size:10.5px;line-height:13px;color:#000;">Art. Gamme Gen.</div>
<div class="a" style="left:1239px;top:517px;width:11px;height:11px;background:#fff;border:1px solid #cfcfcf"></div>
<div class="a" style="left:1096px;width:130px;text-align:right;top:536.86px;font-size:10.5px;line-height:13px;color:#000;">Type VAD</div>
<div class="a" style="left:1096px;width:130px;text-align:right;top:555.86px;font-size:10.5px;line-height:13px;color:#000;">Vari-Article</div>
<div class="a" style="left:1096px;width:130px;text-align:right;top:574.86px;font-size:10.5px;line-height:13px;color:#000;">Lien VAD - Art</div>
<div class="a" style="left:1096px;width:130px;text-align:right;top:593.86px;font-size:10.5px;line-height:13px;color:#000;">Lien V-A Figé</div>
<div class="a" style="left:1239px;top:594px;width:11px;height:11px;background:#fff;border:1px solid #cfcfcf"></div>
<div class="a" style="left:1096px;width:130px;text-align:right;top:612.86px;font-size:10.5px;line-height:13px;color:#000;">Approvisionne ?</div>
<div class="a" style="left:1239px;top:613px;width:11px;height:11px;background:#fff;border:1px solid #cfcfcf"></div>
<svg class="a" style="left:1240px;top:614px" width="9" height="9" viewBox="0 0 9 9"><path d="M1.5 4.5l2.2 2.2 4-4.5" stroke="#b0b0b0" stroke-width="1.1" fill="none"/></svg>
<div class="a" style="left:1096px;width:130px;text-align:right;top:631.86px;font-size:10.5px;line-height:13px;color:#000;">Fabriqué ?</div>
<div class="a" style="left:1239px;top:632px;width:11px;height:11px;background:#fff;border:1px solid #cfcfcf"></div>
<div class="a" style="left:1096px;width:130px;text-align:right;top:650.86px;font-size:10.5px;line-height:13px;color:#000;">Sous-Traité</div>
<div class="a" style="left:1239px;top:651px;width:11px;height:11px;background:#fff;border:1px solid #cfcfcf"></div>
<div class="a" style="left:1096px;width:130px;text-align:right;top:669.86px;font-size:10.5px;line-height:13px;color:#000;">Origine Prin.</div>
<div class="a" style="left:1242px;top:669.86px;font-size:10.5px;line-height:13px;color:#000;letter-spacing:-0.1px;">A</div>
<div class="a" style="left:1265px;top:668px;width:14px;height:14px;background:#fff;border:1px solid #b8b8b8"></div>
<div class="a" style="left:1265.0px;width:14px;text-align:center;top:670.03px;font-size:10px;line-height:12px;color:#000;font-weight:bold;">?</div>
<div class="a" style="left:1285px;top:669.86px;font-size:10.5px;line-height:13px;color:#000;letter-spacing:-0.15px;">Origine Approvisionne</div>
<div class="a" style="left:1096px;width:130px;text-align:right;top:687.86px;font-size:10.5px;line-height:13px;color:#000;">Achats</div>
<div class="a" style="left:1239px;top:688px;width:11px;height:11px;background:#fff;border:1px solid #cfcfcf"></div>
<svg class="a" style="left:1240px;top:689px" width="9" height="9" viewBox="0 0 9 9"><path d="M1.5 4.5l2.2 2.2 4-4.5" stroke="#b0b0b0" stroke-width="1.1" fill="none"/></svg>
<div class="a" style="left:1096px;width:130px;text-align:right;top:706.86px;font-size:10.5px;line-height:13px;color:#000;">Gest.Fab. ?</div>
<div class="a" style="left:1239px;top:707px;width:11px;height:11px;background:#fff;border:1px solid #cfcfcf"></div>
<svg class="a" style="left:1240px;top:708px" width="9" height="9" viewBox="0 0 9 9"><path d="M1.5 4.5l2.2 2.2 4-4.5" stroke="#b0b0b0" stroke-width="1.1" fill="none"/></svg>
<div class="a" style="left:1096px;width:130px;text-align:right;top:725.86px;font-size:10.5px;line-height:13px;color:#000;">Vente ?</div>
<div class="a" style="left:1239px;top:726px;width:11px;height:11px;background:#fff;border:1px solid #cfcfcf"></div>
<svg class="a" style="left:1240px;top:727px" width="9" height="9" viewBox="0 0 9 9"><path d="M1.5 4.5l2.2 2.2 4-4.5" stroke="#b0b0b0" stroke-width="1.1" fill="none"/></svg>
<div class="a" style="left:1096px;width:130px;text-align:right;top:744.86px;font-size:10.5px;line-height:13px;color:#000;">Gest.SsT. ?</div>
<div class="a" style="left:1239px;top:745px;width:11px;height:11px;background:#fff;border:1px solid #cfcfcf"></div>
<div class="a" style="left:1096px;width:130px;text-align:right;top:763.86px;font-size:10.5px;line-height:13px;color:#000;">Stock ?</div>
<div class="a" style="left:1239px;top:764px;width:11px;height:11px;background:#fff;border:1px solid #cfcfcf"></div>
<svg class="a" style="left:1240px;top:765px" width="9" height="9" viewBox="0 0 9 9"><path d="M1.5 4.5l2.2 2.2 4-4.5" stroke="#b0b0b0" stroke-width="1.1" fill="none"/></svg>
<div class="a" style="left:1096px;width:130px;text-align:right;top:782.86px;font-size:10.5px;line-height:13px;color:#000;">Déf.Art.</div>
<div class="a" style="left:1096px;width:130px;text-align:right;top:801.86px;font-size:10.5px;line-height:13px;color:#000;">App.Ext. ?</div>
<div class="a" style="left:1239px;top:802px;width:11px;height:11px;background:#fff;border:1px solid #cfcfcf"></div>
<div class="a" style="left:1096px;width:130px;text-align:right;top:820.86px;font-size:10.5px;line-height:13px;color:#000;">Supp.Ext.</div>
<div class="a" style="left:1332px;top:819px;width:14px;height:14px;background:#fff;border:1px solid #b8b8b8"></div>
<div class="a" style="left:1332.0px;width:14px;text-align:center;top:821.03px;font-size:10px;line-height:12px;color:#000;font-weight:bold;">?</div>
<div class="a" style="left:1096px;width:130px;text-align:right;top:840.86px;font-size:10.5px;line-height:13px;color:#000;">Externe</div>
<div class="a" style="left:0px;top:952px;width:1402px;height:1px;background:#111"></div>
<div class="a" style="left:647px;top:188px;width:254px;height:641px;background:#f1f1f1;border:1px solid #c8c8c8;box-shadow:3px 3px 2px -1px rgba(0,0,0,0.4)"></div>
<div class="a" style="left:678px;top:194px;width:219px;height:1px;background:#d7d7d7"></div>
<div class="a" style="left:682px;top:201.91px;font-size:11.8px;line-height:15px;color:#000;">Création (F9)</div>
<div class="a" style="left:682px;top:223.91px;font-size:11.8px;line-height:15px;color:#000;">Modification (F1)</div>
<div class="a" style="left:682px;top:245.91px;font-size:11.8px;line-height:15px;color:#000;">Duplication (F7)</div>
<div class="a" style="left:682px;top:267.91px;font-size:11.8px;line-height:15px;color:#000;">Suppression Logique (F6)</div>
<div class="a" style="left:682px;top:289.91px;font-size:11.8px;line-height:15px;color:#000;">Détail (F8)</div>
<div class="a" style="left:682px;top:311.91px;font-size:11.8px;line-height:15px;color:#000;">Consultation Inf. Techniques</div>
<div class="a" style="left:682px;top:333.91px;font-size:11.8px;line-height:15px;color:#000;">Historique (F10)</div>
<div class="a" style="left:682px;top:355.91px;font-size:11.8px;line-height:15px;color:#000;">Eléments Récents (Maj+F8)</div>
<div class="a" style="left:682px;top:377.91px;font-size:11.8px;line-height:15px;color:#000;">Historique Messages / Entité</div>
<div class="a" style="left:682px;top:399.91px;font-size:11.8px;line-height:15px;color:#8d8d8d;">Envoyer un message</div>
<div class="a" style="left:678px;top:421px;width:219px;height:1px;background:#d7d7d7"></div>
<div class="a" style="left:682px;top:428.91px;font-size:11.8px;line-height:15px;color:#000;">Nouvelle Tâche</div>
<div class="a" style="left:682px;top:450.91px;font-size:11.8px;line-height:15px;color:#8d8d8d;">Tâches de l'Entité</div>
<div class="a" style="left:678px;top:472px;width:219px;height:1px;background:#d7d7d7"></div>
<div class="a" style="left:682px;top:479.91px;font-size:11.8px;line-height:15px;color:#000;">Joindre un document</div>
<div class="a" style="left:682px;top:501.91px;font-size:11.8px;line-height:15px;color:#000;">Documents GED</div>
<div class="a" style="left:678px;top:523px;width:219px;height:1px;background:#d7d7d7"></div>
<div class="a" style="left:682px;top:530.91px;font-size:11.8px;line-height:15px;color:#000;">Consultation Documents GED</div>
<div class="a" style="left:682px;top:552.91px;font-size:11.8px;line-height:15px;color:#000;">Approbation</div>
<div class="a" style="left:678px;top:574px;width:219px;height:1px;background:#d7d7d7"></div>
<div class="a" style="left:682px;top:581.91px;font-size:11.8px;line-height:15px;color:#000;">Accès à ...</div>
<svg class="a" style="left:884px;top:585px" width="5" height="8" viewBox="0 0 5 8"><path d="M0.5 0.5L4 4 0.5 7.5" stroke="#222" stroke-width="1" fill="none"/></svg>
<div class="a" style="left:678px;top:603px;width:219px;height:1px;background:#d7d7d7"></div>
<div class="a" style="left:650px;top:607px;width:248px;height:22px;background:#91c9f7"></div>
<div class="a" style="left:682px;top:610.91px;font-size:11.8px;line-height:15px;color:#000;">Gestion ...</div>
<svg class="a" style="left:884px;top:614px" width="5" height="8" viewBox="0 0 5 8"><path d="M0.5 0.5L4 4 0.5 7.5" stroke="#222" stroke-width="1" fill="none"/></svg>
<div class="a" style="left:678px;top:632px;width:219px;height:1px;background:#d7d7d7"></div>
<div class="a" style="left:682px;top:639.91px;font-size:11.8px;line-height:15px;color:#000;">Exportation</div>
<svg class="a" style="left:884px;top:643px" width="5" height="8" viewBox="0 0 5 8"><path d="M0.5 0.5L4 4 0.5 7.5" stroke="#222" stroke-width="1" fill="none"/></svg>
<div class="a" style="left:682px;top:661.91px;font-size:11.8px;line-height:15px;color:#000;">Importation de Données</div>
<div class="a" style="left:678px;top:683px;width:219px;height:1px;background:#d7d7d7"></div>
<div class="a" style="left:682px;top:690.91px;font-size:11.8px;line-height:15px;color:#000;">Ma Présentation de Démarrage</div>
<div class="a" style="left:682px;top:712.91px;font-size:11.8px;line-height:15px;color:#000;">Actualiser la Présentation</div>
<div class="a" style="left:682px;top:734.91px;font-size:11.8px;line-height:15px;color:#000;">Présentations</div>
<svg class="a" style="left:884px;top:738px" width="5" height="8" viewBox="0 0 5 8"><path d="M0.5 0.5L4 4 0.5 7.5" stroke="#222" stroke-width="1" fill="none"/></svg>
<div class="a" style="left:678px;top:756px;width:219px;height:1px;background:#d7d7d7"></div>
<div class="a" style="left:682px;top:763.91px;font-size:11.8px;line-height:15px;color:#000;">Définition Filtres et Tris</div>
<div class="a" style="left:682px;top:785.91px;font-size:11.8px;line-height:15px;color:#000;">Sélections Filtres et Tris</div>
<svg class="a" style="left:884px;top:789px" width="5" height="8" viewBox="0 0 5 8"><path d="M0.5 0.5L4 4 0.5 7.5" stroke="#222" stroke-width="1" fill="none"/></svg>
<div class="a" style="left:682px;top:807.91px;font-size:11.8px;line-height:15px;color:#000;">Condition par Défaut (Ctrl-F5)</div>
<div class="a" style="left:894px;top:604px;width:300px;height:335px;background:#f1f1f1;border:1px solid #c8c8c8;box-shadow:3px 3px 2px -1px rgba(0,0,0,0.4)"></div>
<div class="a" style="left:929px;top:610.91px;font-size:11.8px;line-height:15px;color:#000;">Configuration Article</div>
<div class="a" style="left:929px;top:632.91px;font-size:11.8px;line-height:15px;color:#000;">Reset Configuration Article</div>
<div class="a" style="left:929px;top:654.91px;font-size:11.8px;line-height:15px;color:#000;">Variantes Liées</div>
<div class="a" style="left:929px;top:676.91px;font-size:11.8px;line-height:15px;color:#8d8d8d;">Test Scénario (F11)</div>
<div class="a" style="left:925px;top:698px;width:265px;height:1px;background:#d7d7d7"></div>
<div class="a" style="left:929px;top:705.91px;font-size:11.8px;line-height:15px;color:#000;">Nomenclature de Définition</div>
<div class="a" style="left:929px;top:727.91px;font-size:11.8px;line-height:15px;color:#000;">Nomenclature de Pointeurs</div>
<div class="a" style="left:925px;top:749px;width:265px;height:1px;background:#d7d7d7"></div>
<div class="a" style="left:929px;top:756.91px;font-size:11.8px;line-height:15px;color:#000;">Rattachement Sections/Emplacements</div>
<div class="a" style="left:929px;top:778.91px;font-size:11.8px;line-height:15px;color:#000;">Sections/Emplacements Article Courant</div>
<div class="a" style="left:929px;top:800.91px;font-size:11.8px;line-height:15px;color:#000;">Val. Calcul point Cde. et Qté. demandée</div>
<div class="a" style="left:925px;top:822px;width:265px;height:1px;background:#d7d7d7"></div>
<div class="a" style="left:929px;top:829.91px;font-size:11.8px;line-height:15px;color:#000;">Fournisseurs Liés</div>
<div class="a" style="left:897px;top:848px;width:294px;height:22px;background:#91c9f7"></div>
<div class="a" style="left:929px;top:851.91px;font-size:11.8px;line-height:15px;color:#000;">Données Multi-Gestionnaires</div>
<div class="a" style="left:929px;top:873.91px;font-size:11.8px;line-height:15px;color:#000;">Quantités Forcées PDAP</div>
<div class="a" style="left:929px;top:895.91px;font-size:11.8px;line-height:15px;color:#000;">Test Calcul PDAP</div>
<div class="a" style="left:929px;top:917.91px;font-size:11.8px;line-height:15px;color:#000;">Test Valorisation PRV</div>
<div class="a" style="left:41px;top:200px;width:250px;height:31px;background:rgba(206,64,152,0.40);border:1.5px solid rgba(170,50,110,0.42);border-radius:6px"></div>
<div class="a" style="left:650px;top:600px;width:251px;height:31px;background:rgba(206,64,152,0.40);border:1.5px solid rgba(170,50,110,0.42);border-radius:6px"></div>
<div class="a" style="left:890px;top:840px;width:331px;height:31px;background:rgba(206,64,152,0.40);border:1.5px solid rgba(170,50,110,0.42);border-radius:6px"></div>
<svg class="a" style="left:1036px;top:852px" width="13" height="20" viewBox="0 0 13 20"><path d="M1 1v15l3.5-3.3 2.5 5.8 2.3-1-2.5-5.6H12z" fill="#fff" stroke="#000" stroke-width="1"/></svg>
</body></html>
